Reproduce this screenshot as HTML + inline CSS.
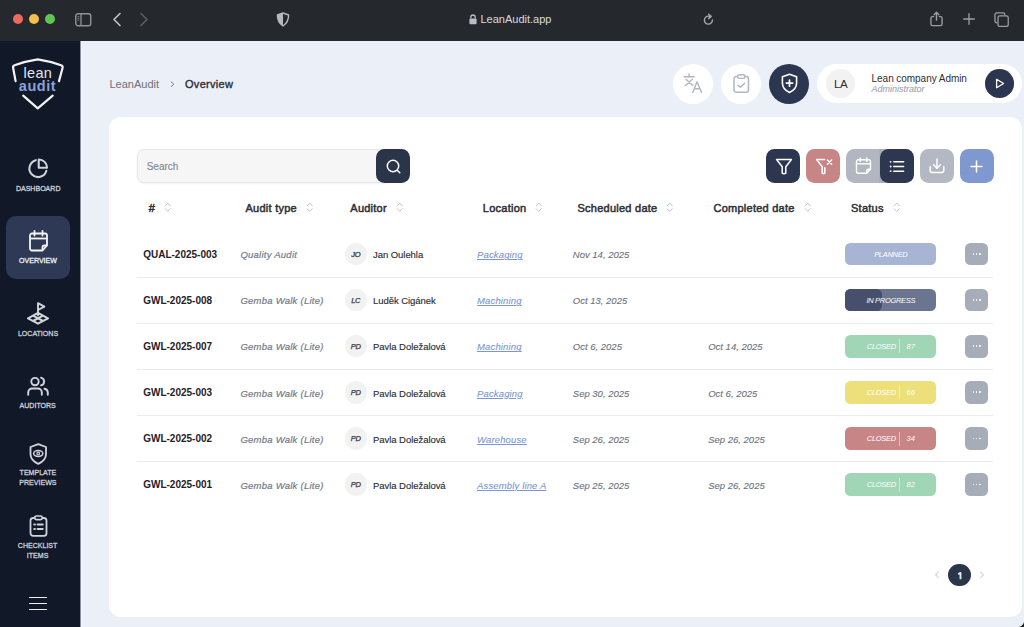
<!DOCTYPE html><html><head><meta charset="utf-8"><style>
html,body{margin:0;padding:0;width:1024px;height:627px;overflow:hidden;background:#ebeff7;font-family:"Liberation Sans", sans-serif;}
.a{position:absolute;}
.t{position:absolute;white-space:nowrap;}
</style></head><body>
<div class="a" style="left:0.00px;top:0.00px;width:1024.00px;height:40.50px;background:#25292d;border-radius:0px;"></div>
<div class="a" style="left:12.55px;top:13.95px;width:10.50px;height:10.50px;background:#ec6a5e;border-radius:5.25px;"></div>
<div class="a" style="left:28.55px;top:13.95px;width:10.50px;height:10.50px;background:#f4bf4f;border-radius:5.25px;"></div>
<div class="a" style="left:44.65px;top:13.95px;width:10.50px;height:10.50px;background:#61c554;border-radius:5.25px;"></div>
<svg class="a" style="left:74.50px;top:12.50px;" width="17" height="14" viewBox="0 0 17 14" fill="none"><rect x="0.75" y="0.75" width="15" height="12" rx="2.2" stroke="#8f9297" stroke-width="1.4"/><line x1="6" y1="1" x2="6" y2="13" stroke="#8f9297" stroke-width="1.3"/><line x1="2.6" y1="3.6" x2="4.2" y2="3.6" stroke="#8f9297" stroke-width="0.9"/><line x1="2.6" y1="5.4" x2="4.2" y2="5.4" stroke="#8f9297" stroke-width="0.9"/><line x1="2.6" y1="7.2" x2="4.2" y2="7.2" stroke="#8f9297" stroke-width="0.9"/></svg>
<svg class="a" style="left:112.00px;top:12.00px;" width="10" height="15" viewBox="0 0 10 15" fill="none"><polyline points="8,1.5 2,7.5 8,13.5" stroke="#c3c5c8" stroke-width="1.6" stroke-linecap="round" stroke-linejoin="round"/></svg>
<svg class="a" style="left:139.00px;top:12.00px;" width="10" height="15" viewBox="0 0 10 15" fill="none"><polyline points="2,1.5 8,7.5 2,13.5" stroke="#5b5e62" stroke-width="1.6" stroke-linecap="round" stroke-linejoin="round"/></svg>
<svg class="a" style="left:276.00px;top:12.00px;" width="14" height="15" viewBox="0 0 14 15" fill="none"><path d="M7 1 L12.6 3 Q12.8 10 7 14 Q1.2 10 1.4 3 Z" stroke="#b5b8bd" stroke-width="1.4" stroke-linejoin="round"/><path d="M7 1 L1.4 3 Q1.2 10 7 14 Z" fill="#b5b8bd"/></svg>
<svg class="a" style="left:468.50px;top:14.00px;" width="8" height="10.5" viewBox="0 0 8 10.5" fill="none"><path d="M1.8 4.6 V3.2 A2.2 2.2 0 0 1 6.2 3.2 V4.6" stroke="#b8bbbf" stroke-width="1.3"/><rect x="0.4" y="4.6" width="7.2" height="5.6" rx="1" fill="#b8bbbf"/></svg>
<div class="t" style="left:480.50px;top:14.19px;font-size:11px;line-height:11px;color:#d9dbdd;font-weight:normal;font-style:normal;">LeanAudit.app</div>
<svg class="a" style="left:703.00px;top:13.00px;" width="11" height="12.5" viewBox="0 0 11 12.5" fill="none"><path d="M7.3 3.6 A4 4 0 1 0 9.4 6.9" stroke="#a6a9ad" stroke-width="1.4" stroke-linecap="round"/><path d="M5.6 1.2 L8.2 3.4 L5.6 5.6" stroke="#a6a9ad" stroke-width="1.4" stroke-linecap="round" stroke-linejoin="round"/></svg>
<svg class="a" style="left:929.50px;top:11.00px;" width="13" height="15.8" viewBox="0 0 14 17" fill="none"><path d="M4.5 6 H2.8 A1.8 1.8 0 0 0 1 7.8 V13.9 A1.8 1.8 0 0 0 2.8 15.7 H11.2 A1.8 1.8 0 0 0 13 13.9 V7.8 A1.8 1.8 0 0 0 11.2 6 H9.5" stroke="#9c9fa4" stroke-width="1.45"/><line x1="7" y1="2" x2="7" y2="10.5" stroke="#9c9fa4" stroke-width="1.55"/><polyline points="4.4,4 7,1.3 9.6,4" stroke="#9c9fa4" stroke-width="1.45" stroke-linecap="round" stroke-linejoin="round"/></svg>
<svg class="a" style="left:962.80px;top:13.40px;" width="12" height="12" viewBox="0 0 12 12" fill="none"><line x1="6" y1="0.7" x2="6" y2="11.3" stroke="#9c9fa4" stroke-width="1.3" stroke-linecap="round"/><line x1="0.7" y1="6" x2="11.3" y2="6" stroke="#9c9fa4" stroke-width="1.3" stroke-linecap="round"/></svg>
<svg class="a" style="left:994.30px;top:11.50px;" width="15.5" height="15.5" viewBox="0 0 16 16" fill="none"><path d="M3.2 11.2 H2.8 A1.8 1.8 0 0 1 1 9.4 V2.8 A1.8 1.8 0 0 1 2.8 1 H9.4 A1.8 1.8 0 0 1 11.2 2.8 V3.2" stroke="#9c9fa4" stroke-width="1.3"/><rect x="4.1" y="4.1" width="10.6" height="10.8" rx="1.9" stroke="#9c9fa4" stroke-width="1.3"/></svg>
<div class="a" style="left:0.00px;top:40.50px;width:80.00px;height:586.50px;background:#111827;border-radius:0px;"></div>
<div class="a" style="left:80.00px;top:40.50px;width:1.00px;height:586.50px;background:#8a909c;border-radius:0px;"></div>
<div class="a" style="left:81.00px;top:40.50px;width:1.00px;height:586.50px;background:#f1f4fa;border-radius:0px;"></div>
<svg class="a" style="left:11.00px;top:57.50px;" width="54" height="52" viewBox="11 57.5 54 52" fill="none"><path d="M15.6 80.6 L13.1 67.2 Q12.8 65.4 14.6 64.8 Q26 60.6 37.7 58.9 Q49.4 60.6 61.1 64.8 Q62.9 65.4 62.6 67.2 L59 80.6" stroke="#f2f3f5" stroke-width="2.2" stroke-linejoin="round" stroke-linecap="round"/><path d="M23.2 95.2 L37.7 107.8 L52.7 95.2" stroke="#f2f3f5" stroke-width="2.2" stroke-linejoin="round" stroke-linecap="round"/></svg>
<div class="t" style="left:23.40px;top:65.73px;font-size:14.5px;line-height:14.5px;color:#e6e8ec;font-weight:normal;font-style:normal;letter-spacing:0.35px;">lean</div>
<div class="t" style="left:18.80px;top:79.23px;font-size:14.5px;line-height:14.5px;color:#8aa2d8;font-weight:bold;font-style:normal;letter-spacing:0.55px;">audit</div>
<svg class="a" style="left:26.20px;top:156.70px;" width="23.5" height="23.5" viewBox="0 0 24 24" fill="none"><path d="M10 3.2 A8.8 8.8 0 1 0 20.8 14" stroke="#d0d4dc" stroke-width="2.1" stroke-linecap="round"/><path d="M13 2.5 V11 H21.5 A8.5 8.5 0 0 0 13 2.5 Z" stroke="#d0d4dc" stroke-width="2.1" stroke-linejoin="round"/></svg>
<div class="t" style="left:0;width:76.4px;text-align:center;top:184.73px;font-size:8px;line-height:8px;color:#d0d4dc;-webkit-text-stroke:0.3px #d0d4dc;transform:scaleX(0.88);transform-origin:38.2px 0;">DASHBOARD</div>
<div class="a" style="left:5.80px;top:215.50px;width:64.10px;height:63.70px;background:#2e3a55;border-radius:10px;"></div>
<svg class="a" style="left:27.50px;top:230.00px;" width="21" height="22.5" viewBox="0 0 21 22.5" fill="none"><path d="M2 5.5 A2 2 0 0 1 4 3.5 H17 A2 2 0 0 1 19 5.5 V15.5 L14.5 20.5 H4 A2 2 0 0 1 2 18.5 Z" stroke="#f4f5f7" stroke-width="1.8" stroke-linejoin="round"/><line x1="2.5" y1="8.5" x2="18.5" y2="8.5" stroke="#f4f5f7" stroke-width="1.8"/><line x1="6.5" y1="1" x2="6.5" y2="5.5" stroke="#f4f5f7" stroke-width="1.8" stroke-linecap="round"/><line x1="14.5" y1="1" x2="14.5" y2="5.5" stroke="#f4f5f7" stroke-width="1.8" stroke-linecap="round"/><path d="M19 15.5 H16.5 A2 2 0 0 0 14.5 17.5 V20.5" stroke="#f4f5f7" stroke-width="1.8" stroke-linejoin="round"/></svg>
<div class="t" style="left:0;width:76.0px;text-align:center;top:257.43px;font-size:8px;line-height:8px;color:#f2f3f5;-webkit-text-stroke:0.3px #f2f3f5;transform:scaleX(0.88);transform-origin:38.0px 0;">OVERVIEW</div>
<svg class="a" style="left:26.70px;top:302.00px;" width="22" height="23.5" viewBox="0 0 22 23.5" fill="none"><path d="M11 10.9 L21 16.3 L11 21.7 L1 16.3 Z" stroke="#d0d4dc" stroke-width="2.1" stroke-linejoin="round"/><path d="M6 13.6 L16 19 M16 13.6 L6 19" stroke="#d0d4dc" stroke-width="2"/><path d="M11 13.2 V1.2 L17.4 4.6 L11 8" stroke="#d0d4dc" stroke-width="1.9" stroke-linejoin="round" stroke-linecap="round"/></svg>
<div class="t" style="left:0;width:76.0px;text-align:center;top:329.73px;font-size:8px;line-height:8px;color:#d0d4dc;-webkit-text-stroke:0.3px #d0d4dc;transform:scaleX(0.88);transform-origin:38.0px 0;">LOCATIONS</div>
<svg class="a" style="left:26.70px;top:376.00px;" width="22" height="20" viewBox="0 0 22 20" fill="none"><circle cx="8" cy="5.6" r="3.7" stroke="#d0d4dc" stroke-width="1.9"/><path d="M14 1.6 A4 4 0 0 1 14 9.4" stroke="#d0d4dc" stroke-width="1.9" stroke-linecap="round"/><path d="M1.2 18.8 V16.5 A4 4 0 0 1 5.2 12.5 H10.8 A4 4 0 0 1 14.8 16.5 V18.8" stroke="#d0d4dc" stroke-width="1.9" stroke-linecap="round"/><path d="M17.5 12.8 A4 4 0 0 1 20.8 16.6 V18.8" stroke="#d0d4dc" stroke-width="1.9" stroke-linecap="round"/></svg>
<div class="t" style="left:0;width:75.4px;text-align:center;top:402.13px;font-size:8px;line-height:8px;color:#d0d4dc;-webkit-text-stroke:0.3px #d0d4dc;transform:scaleX(0.88);transform-origin:37.7px 0;">AUDITORS</div>
<svg class="a" style="left:28.70px;top:442.50px;" width="18.5" height="22" viewBox="0 0 18.5 22" fill="none"><path d="M9.25 1.2 L17 4 V11 Q17 17.5 9.25 20.8 Q1.5 17.5 1.5 11 V4 Z" stroke="#d0d4dc" stroke-width="1.8" stroke-linejoin="round"/><ellipse cx="9.25" cy="10.5" rx="4.6" ry="2.9" stroke="#d0d4dc" stroke-width="1.5"/><circle cx="9.25" cy="10.5" r="1.3" stroke="#d0d4dc" stroke-width="1.2"/></svg>
<div class="t" style="left:0;width:75.8px;text-align:center;top:469.43px;font-size:8px;line-height:8px;color:#d0d4dc;-webkit-text-stroke:0.3px #d0d4dc;transform:scaleX(0.88);transform-origin:37.9px 0;">TEMPLATE</div>
<div class="t" style="left:0;width:75.8px;text-align:center;top:479.43px;font-size:8px;line-height:8px;color:#d0d4dc;-webkit-text-stroke:0.3px #d0d4dc;transform:scaleX(0.88);transform-origin:37.9px 0;">PREVIEWS</div>
<svg class="a" style="left:28.50px;top:515.00px;" width="19" height="22" viewBox="0 0 19 22" fill="none"><rect x="1.5" y="3" width="16" height="17.8" rx="2.6" stroke="#d0d4dc" stroke-width="1.8"/><rect x="5.8" y="1" width="7.4" height="3.6" rx="1.6" stroke="#d0d4dc" stroke-width="1.7" fill="#111827"/><line x1="5.2" y1="9.5" x2="6" y2="9.5" stroke="#d0d4dc" stroke-width="1.8" stroke-linecap="round"/><line x1="8.5" y1="9.5" x2="13.8" y2="9.5" stroke="#d0d4dc" stroke-width="1.8" stroke-linecap="round"/><line x1="5.2" y1="14" x2="6" y2="14" stroke="#d0d4dc" stroke-width="1.8" stroke-linecap="round"/><line x1="8.5" y1="14" x2="13.8" y2="14" stroke="#d0d4dc" stroke-width="1.8" stroke-linecap="round"/></svg>
<div class="t" style="left:0;width:75.2px;text-align:center;top:542.43px;font-size:8px;line-height:8px;color:#d0d4dc;-webkit-text-stroke:0.3px #d0d4dc;transform:scaleX(0.88);transform-origin:37.6px 0;">CHECKLIST</div>
<div class="t" style="left:0;width:75.2px;text-align:center;top:551.93px;font-size:8px;line-height:8px;color:#d0d4dc;-webkit-text-stroke:0.3px #d0d4dc;transform:scaleX(0.88);transform-origin:37.6px 0;">ITEMS</div>
<div class="a" style="left:29.20px;top:596.60px;width:17.40px;height:1.80px;background:#eef0f3;border-radius:1px;"></div>
<div class="a" style="left:29.20px;top:602.60px;width:17.40px;height:1.80px;background:#eef0f3;border-radius:1px;"></div>
<div class="a" style="left:29.20px;top:608.60px;width:17.40px;height:1.80px;background:#eef0f3;border-radius:1px;"></div>
<div class="t" style="left:109.50px;top:78.99px;font-size:11px;line-height:11px;color:#6d717a;font-weight:normal;font-style:normal;">LeanAudit</div>
<svg class="a" style="left:170.30px;top:80.80px;" width="5" height="6.5" viewBox="0 0 5 6.5" fill="none"><polyline points="1.1,0.9 3.9,3.25 1.1,5.6" stroke="#7d818a" stroke-width="1" stroke-linecap="round" stroke-linejoin="round"/></svg>
<div class="t" style="left:185.00px;top:78.99px;font-size:11px;line-height:11px;color:#2c2e33;font-weight:normal;font-style:normal;letter-spacing:0.3px;-webkit-text-stroke:0.35px #2c2e33;">Overview</div>
<div class="a" style="left:672.50px;top:63.50px;width:40.00px;height:40.00px;background:#ffffff;border-radius:20.0px;"></div>
<div class="a" style="left:720.80px;top:63.50px;width:40.00px;height:40.00px;background:#ffffff;border-radius:20.0px;"></div>
<div class="a" style="left:769.10px;top:63.50px;width:40.00px;height:40.00px;background:#2c3650;border-radius:20.0px;"></div>
<svg class="a" style="left:682.50px;top:73.00px;" width="20" height="20.5" viewBox="0 0 20 20.5" fill="none"><line x1="1" y1="3.8" x2="11.2" y2="3.8" stroke="#b0b5c0" stroke-width="1.4" stroke-linecap="round"/><line x1="6.1" y1="1" x2="6.1" y2="3.8" stroke="#b0b5c0" stroke-width="1.4" stroke-linecap="round"/><path d="M3 6.2 L9.8 12.6 M9.4 6.2 L2.4 12.6" stroke="#b0b5c0" stroke-width="1.4" stroke-linecap="round"/><path d="M9.8 19.4 L14 8.8 L18.6 19.4 M11.3 15.8 H17.1" stroke="#b0b5c0" stroke-width="1.4" stroke-linecap="round" stroke-linejoin="round"/></svg>
<svg class="a" style="left:733.00px;top:74.00px;" width="16.5" height="19" viewBox="0 0 16.5 19" fill="none"><rect x="1" y="2.6" width="14.5" height="15.6" rx="2.3" stroke="#b0b5c0" stroke-width="1.5"/><rect x="4.6" y="0.8" width="7.3" height="3.6" rx="1.6" stroke="#b0b5c0" stroke-width="1.4" fill="#fff"/><polyline points="5,11.2 7.4,13.3 11.6,9.3" stroke="#b0b5c0" stroke-width="1.4" stroke-linecap="round" stroke-linejoin="round"/></svg>
<svg class="a" style="left:780.50px;top:73.00px;" width="17" height="20.5" viewBox="0 0 17 20.5" fill="none"><path d="M8.5 1.2 L15.6 3.8 V10 Q15.6 16.2 8.5 19.4 Q1.4 16.2 1.4 10 V3.8 Z" stroke="#ffffff" stroke-width="1.6" stroke-linejoin="round"/><line x1="8.5" y1="7" x2="8.5" y2="13.2" stroke="#fff" stroke-width="1.7" stroke-linecap="round"/><line x1="5.4" y1="10.1" x2="11.6" y2="10.1" stroke="#fff" stroke-width="1.7" stroke-linecap="round"/></svg>
<div class="a" style="left:817.30px;top:63.70px;width:204.90px;height:39.70px;background:#ffffff;border-radius:20px;"></div>
<div class="a" style="left:826.15px;top:69.25px;width:28.50px;height:28.50px;background:#f2f2f3;border-radius:14.25px;"></div>
<div class="t" style="left:834.00px;top:78.67px;font-size:11.5px;line-height:11.5px;color:#2d2f34;font-weight:normal;font-style:normal;letter-spacing:-0.3px;">LA</div>
<div class="t" style="left:871.60px;top:73.73px;font-size:10px;line-height:10px;color:#2d2f34;font-weight:normal;font-style:normal;letter-spacing:-0.05px;">Lean company Admin</div>
<div class="t" style="left:871.60px;top:84.78px;font-size:9px;line-height:9px;color:#9ea3af;font-weight:normal;font-style:italic;-webkit-text-stroke:0.1px #9ea3af;">Administrator</div>
<div class="a" style="left:985.05px;top:69.15px;width:28.70px;height:28.70px;background:#2c3650;border-radius:14.35px;"></div>
<svg class="a" style="left:994.50px;top:78.00px;" width="10" height="11" viewBox="0 0 10 11" fill="none"><path d="M1.6 1.3 L8.6 5.5 L1.6 9.7 Z" stroke="#fff" stroke-width="1.3" stroke-linejoin="round"/></svg>
<div class="a" style="left:108.80px;top:117.40px;width:913.50px;height:500.10px;background:#ffffff;border-radius:12px;"></div>
<div class="a" style="left:137.00px;top:149.00px;width:255.00px;height:34.00px;background:#f6f6f7;border-radius:7px;box-sizing:border-box;border:1px solid #e4e7ee;box-shadow:0 1px 2px rgba(40,50,80,0.06);"></div>
<div class="t" style="left:146.70px;top:161.84px;font-size:10px;line-height:10px;color:#85888e;font-weight:normal;font-style:normal;-webkit-text-stroke:0.15px #85888e;">Search</div>
<div class="a" style="left:375.80px;top:148.80px;width:34.10px;height:34.00px;background:#2b3549;border-radius:8.5px;"></div>
<svg class="a" style="left:384.50px;top:157.50px;" width="17" height="17" viewBox="0 0 17 17" fill="none"><circle cx="8" cy="8" r="5.7" stroke="#fff" stroke-width="1.5"/><line x1="12.2" y1="12.2" x2="14.8" y2="14.8" stroke="#fff" stroke-width="1.5" stroke-linecap="round"/></svg>
<div class="a" style="left:766.40px;top:148.80px;width:34.00px;height:34.00px;background:#2c3650;border-radius:8.5px;"></div>
<svg class="a" style="left:774.50px;top:158.00px;" width="18" height="17" viewBox="0 0 18 17" fill="none"><path d="M1.6 1.6 H16.4 L10.8 8.8 V15.2 Q9 16.4 7.2 15.2 V8.8 Z" stroke="#fff" stroke-width="1.5" stroke-linejoin="round"/></svg>
<div class="a" style="left:806.30px;top:148.80px;width:34.00px;height:34.00px;background:#c88585;border-radius:8.5px;"></div>
<svg class="a" style="left:814.50px;top:158.00px;" width="18" height="17" viewBox="0 0 18 17" fill="none"><path d="M9.6 1.6 H1.6 L7.2 8.8 V15.2 Q8.6 16.2 9.8 15.2 V9.8" stroke="#fff" stroke-width="1.5" stroke-linejoin="round" stroke-linecap="round"/><path d="M12.4 2 L16.6 6.2 M16.6 2 L12.4 6.2" stroke="#fff" stroke-width="1.5" stroke-linecap="round"/></svg>
<div class="a" style="left:845.90px;top:148.80px;width:68.30px;height:34.00px;background:#b1b6c1;border-radius:8.5px;"></div>
<div class="a" style="left:878.50px;top:148.80px;width:5.50px;height:34.00px;background:#a9aeba;border-radius:0px;"></div>
<div class="a" style="left:880.20px;top:148.80px;width:34.00px;height:34.00px;background:#2e3750;border-radius:8.5px;"></div>
<svg class="a" style="left:854.50px;top:157.00px;" width="17" height="17.5" viewBox="0 0 17 17.5" fill="none"><path d="M1.5 4.5 A1.8 1.8 0 0 1 3.3 2.7 H13.7 A1.8 1.8 0 0 1 15.5 4.5 V12.2 L11.7 16.2 H3.3 A1.8 1.8 0 0 1 1.5 14.4 Z" stroke="#fff" stroke-width="1.4" stroke-linejoin="round"/><line x1="1.8" y1="6.8" x2="15.2" y2="6.8" stroke="#fff" stroke-width="1.4"/><line x1="5.2" y1="1" x2="5.2" y2="4.4" stroke="#fff" stroke-width="1.4" stroke-linecap="round"/><line x1="11.8" y1="1" x2="11.8" y2="4.4" stroke="#fff" stroke-width="1.4" stroke-linecap="round"/><path d="M15.5 12.2 H13.5 A1.8 1.8 0 0 0 11.7 14 V16.2" stroke="#fff" stroke-width="1.4" stroke-linejoin="round"/></svg>
<svg class="a" style="left:889.00px;top:159.50px;" width="16" height="13" viewBox="0 0 16 13" fill="none"><circle cx="1.6" cy="1.8" r="0.9" fill="#fff"/><circle cx="1.6" cy="6.5" r="0.9" fill="#fff"/><circle cx="1.6" cy="11.2" r="0.9" fill="#fff"/><line x1="4.8" y1="1.8" x2="14.6" y2="1.8" stroke="#fff" stroke-width="1.6" stroke-linecap="round"/><line x1="4.8" y1="6.5" x2="14.6" y2="6.5" stroke="#fff" stroke-width="1.6" stroke-linecap="round"/><line x1="4.8" y1="11.2" x2="14.6" y2="11.2" stroke="#fff" stroke-width="1.6" stroke-linecap="round"/></svg>
<div class="a" style="left:920.00px;top:148.80px;width:33.80px;height:34.00px;background:#b4b8c2;border-radius:8.5px;"></div>
<svg class="a" style="left:929.00px;top:158.00px;" width="16" height="15.5" viewBox="0 0 16 15.5" fill="none"><path d="M1.2 8.8 V12.6 A1.8 1.8 0 0 0 3 14.4 H13 A1.8 1.8 0 0 0 14.8 12.6 V8.8" stroke="#fff" stroke-width="1.5" stroke-linecap="round"/><line x1="8" y1="1" x2="8" y2="10" stroke="#fff" stroke-width="1.5" stroke-linecap="round"/><polyline points="4.6,6.8 8,10.2 11.4,6.8" stroke="#fff" stroke-width="1.5" stroke-linecap="round" stroke-linejoin="round"/></svg>
<div class="a" style="left:959.50px;top:148.80px;width:34.40px;height:34.00px;background:#7f98cf;border-radius:8.5px;"></div>
<svg class="a" style="left:970.20px;top:159.50px;" width="13" height="13" viewBox="0 0 13 13" fill="none"><line x1="6.5" y1="1" x2="6.5" y2="12" stroke="#fff" stroke-width="1.5" stroke-linecap="round"/><line x1="1" y1="6.5" x2="12" y2="6.5" stroke="#fff" stroke-width="1.5" stroke-linecap="round"/></svg>
<div class="t" style="left:148.80px;top:202.89px;font-size:11px;line-height:11px;color:#2f3137;font-weight:normal;font-style:normal;letter-spacing:0.25px;-webkit-text-stroke:0.5px #2f3137;">#</div>
<svg class="a" style="left:164.10px;top:202.40px;" width="7.5" height="10.5" viewBox="0 0 7.5 10.5" fill="none"><polyline points="1.2,3.8 3.75,1.1 6.3,3.8" stroke="#bcc0c9" stroke-width="0.95" stroke-linecap="round" stroke-linejoin="round"/><polyline points="1.2,6.7 3.75,9.4 6.3,6.7" stroke="#bcc0c9" stroke-width="0.95" stroke-linecap="round" stroke-linejoin="round"/></svg>
<div class="t" style="left:245.50px;top:202.89px;font-size:11px;line-height:11px;color:#2f3137;font-weight:normal;font-style:normal;letter-spacing:0.25px;-webkit-text-stroke:0.5px #2f3137;">Audit type</div>
<svg class="a" style="left:305.80px;top:202.40px;" width="7.5" height="10.5" viewBox="0 0 7.5 10.5" fill="none"><polyline points="1.2,3.8 3.75,1.1 6.3,3.8" stroke="#bcc0c9" stroke-width="0.95" stroke-linecap="round" stroke-linejoin="round"/><polyline points="1.2,6.7 3.75,9.4 6.3,6.7" stroke="#bcc0c9" stroke-width="0.95" stroke-linecap="round" stroke-linejoin="round"/></svg>
<div class="t" style="left:350.30px;top:202.89px;font-size:11px;line-height:11px;color:#2f3137;font-weight:normal;font-style:normal;letter-spacing:0.25px;-webkit-text-stroke:0.5px #2f3137;">Auditor</div>
<svg class="a" style="left:396.30px;top:202.40px;" width="7.5" height="10.5" viewBox="0 0 7.5 10.5" fill="none"><polyline points="1.2,3.8 3.75,1.1 6.3,3.8" stroke="#bcc0c9" stroke-width="0.95" stroke-linecap="round" stroke-linejoin="round"/><polyline points="1.2,6.7 3.75,9.4 6.3,6.7" stroke="#bcc0c9" stroke-width="0.95" stroke-linecap="round" stroke-linejoin="round"/></svg>
<div class="t" style="left:482.80px;top:202.89px;font-size:11px;line-height:11px;color:#2f3137;font-weight:normal;font-style:normal;letter-spacing:0.25px;-webkit-text-stroke:0.5px #2f3137;">Location</div>
<svg class="a" style="left:535.30px;top:202.40px;" width="7.5" height="10.5" viewBox="0 0 7.5 10.5" fill="none"><polyline points="1.2,3.8 3.75,1.1 6.3,3.8" stroke="#bcc0c9" stroke-width="0.95" stroke-linecap="round" stroke-linejoin="round"/><polyline points="1.2,6.7 3.75,9.4 6.3,6.7" stroke="#bcc0c9" stroke-width="0.95" stroke-linecap="round" stroke-linejoin="round"/></svg>
<div class="t" style="left:577.50px;top:202.89px;font-size:11px;line-height:11px;color:#2f3137;font-weight:normal;font-style:normal;letter-spacing:0.25px;-webkit-text-stroke:0.5px #2f3137;">Scheduled date</div>
<svg class="a" style="left:665.50px;top:202.40px;" width="7.5" height="10.5" viewBox="0 0 7.5 10.5" fill="none"><polyline points="1.2,3.8 3.75,1.1 6.3,3.8" stroke="#bcc0c9" stroke-width="0.95" stroke-linecap="round" stroke-linejoin="round"/><polyline points="1.2,6.7 3.75,9.4 6.3,6.7" stroke="#bcc0c9" stroke-width="0.95" stroke-linecap="round" stroke-linejoin="round"/></svg>
<div class="t" style="left:713.50px;top:202.89px;font-size:11px;line-height:11px;color:#2f3137;font-weight:normal;font-style:normal;letter-spacing:0.25px;-webkit-text-stroke:0.5px #2f3137;">Completed date</div>
<svg class="a" style="left:803.80px;top:202.40px;" width="7.5" height="10.5" viewBox="0 0 7.5 10.5" fill="none"><polyline points="1.2,3.8 3.75,1.1 6.3,3.8" stroke="#bcc0c9" stroke-width="0.95" stroke-linecap="round" stroke-linejoin="round"/><polyline points="1.2,6.7 3.75,9.4 6.3,6.7" stroke="#bcc0c9" stroke-width="0.95" stroke-linecap="round" stroke-linejoin="round"/></svg>
<div class="t" style="left:851.00px;top:202.89px;font-size:11px;line-height:11px;color:#2f3137;font-weight:normal;font-style:normal;letter-spacing:0.25px;-webkit-text-stroke:0.5px #2f3137;">Status</div>
<svg class="a" style="left:892.80px;top:202.40px;" width="7.5" height="10.5" viewBox="0 0 7.5 10.5" fill="none"><polyline points="1.2,3.8 3.75,1.1 6.3,3.8" stroke="#bcc0c9" stroke-width="0.95" stroke-linecap="round" stroke-linejoin="round"/><polyline points="1.2,6.7 3.75,9.4 6.3,6.7" stroke="#bcc0c9" stroke-width="0.95" stroke-linecap="round" stroke-linejoin="round"/></svg>
<div class="t" style="left:143.20px;top:249.53px;font-size:10px;line-height:10px;color:#1f2126;font-weight:bold;font-style:normal;">QUAL-2025-003</div>
<div class="t" style="left:240.40px;top:250.26px;font-size:9.5px;line-height:9.5px;color:#737a89;font-weight:normal;font-style:italic;letter-spacing:0.25px;-webkit-text-stroke:0.2px #737a89;">Quality Audit</div>
<div class="a" style="left:344.65px;top:242.95px;width:22.30px;height:22.30px;background:#f2f2f3;border-radius:11.15px;"></div>
<div class="t" style="left:344.6px;width:22.3px;text-align:center;top:250.70px;font-size:7.5px;line-height:7.5px;color:#34363b;font-style:italic;-webkit-text-stroke:0.25px #34363b;letter-spacing:-0.2px;">JO</div>
<div class="t" style="left:373.00px;top:250.26px;font-size:9.5px;line-height:9.5px;color:#2d2f34;font-weight:normal;font-style:normal;letter-spacing:-0.05px;-webkit-text-stroke:0.15px #2d2f34;">Jan Oulehla</div>
<div class="t" style="left:477.00px;top:250.26px;font-size:9.5px;line-height:9.5px;color:#7a96d6;font-weight:normal;font-style:italic;text-decoration:underline;text-decoration-thickness:0.8px;text-underline-offset:1px;letter-spacing:0.15px;-webkit-text-stroke:0.1px #7a96d6;">Packaging</div>
<div class="t" style="left:572.80px;top:250.26px;font-size:9.5px;line-height:9.5px;color:#6b707c;font-weight:normal;font-style:italic;letter-spacing:0px;-webkit-text-stroke:0.1px #6b707c;">Nov 14, 2025</div>
<div class="a" style="left:845.30px;top:242.80px;width:90.90px;height:22.50px;background:#a7b4d4;border-radius:5.5px;"></div>
<div class="t" style="left:845.3px;width:91px;text-align:center;top:250.60px;font-size:7.5px;line-height:7.5px;color:#fff;font-style:italic;letter-spacing:-0.3px;">PLANNED</div>
<div class="a" style="left:965.30px;top:242.80px;width:22.70px;height:22.50px;background:#a7adb8;border-radius:5.5px;"></div>
<div class="a" style="left:972.60px;top:253.10px;width:1.60px;height:1.60px;background:#ffffff;border-radius:0.8px;"></div>
<div class="a" style="left:975.80px;top:253.10px;width:1.60px;height:1.60px;background:#ffffff;border-radius:0.8px;"></div>
<div class="a" style="left:979.00px;top:253.10px;width:1.60px;height:1.60px;background:#ffffff;border-radius:0.8px;"></div>
<div class="a" style="left:137.30px;top:276.50px;width:855.90px;height:1.10px;background:#ececee;border-radius:0px;"></div>
<div class="t" style="left:143.20px;top:295.64px;font-size:10px;line-height:10px;color:#1f2126;font-weight:bold;font-style:normal;">GWL-2025-008</div>
<div class="t" style="left:240.40px;top:296.36px;font-size:9.5px;line-height:9.5px;color:#737a89;font-weight:normal;font-style:italic;letter-spacing:0.25px;-webkit-text-stroke:0.2px #737a89;">Gemba Walk (Lite)</div>
<div class="a" style="left:344.65px;top:289.05px;width:22.30px;height:22.30px;background:#f2f2f3;border-radius:11.15px;"></div>
<div class="t" style="left:344.6px;width:22.3px;text-align:center;top:296.80px;font-size:7.5px;line-height:7.5px;color:#34363b;font-style:italic;-webkit-text-stroke:0.25px #34363b;letter-spacing:-0.2px;">LC</div>
<div class="t" style="left:373.00px;top:296.36px;font-size:9.5px;line-height:9.5px;color:#2d2f34;font-weight:normal;font-style:normal;letter-spacing:-0.05px;-webkit-text-stroke:0.15px #2d2f34;">Luděk Cigánek</div>
<div class="t" style="left:477.00px;top:296.36px;font-size:9.5px;line-height:9.5px;color:#7a96d6;font-weight:normal;font-style:italic;text-decoration:underline;text-decoration-thickness:0.8px;text-underline-offset:1px;letter-spacing:0.15px;-webkit-text-stroke:0.1px #7a96d6;">Machining</div>
<div class="t" style="left:572.80px;top:296.36px;font-size:9.5px;line-height:9.5px;color:#6b707c;font-weight:normal;font-style:italic;letter-spacing:0px;-webkit-text-stroke:0.1px #6b707c;">Oct 13, 2025</div>
<div class="a" style="left:845.30px;top:288.90px;width:90.90px;height:22.50px;background:#6b7590;border-radius:5.5px;"></div>
<div class="a" style="left:845.30px;top:288.90px;width:36.70px;height:22.50px;background:#464f6c;border-radius:5.5px;"></div>
<div class="t" style="left:845.3px;width:91px;text-align:center;top:296.70px;font-size:7.5px;line-height:7.5px;color:#fff;font-style:italic;letter-spacing:-0.3px;">IN PROGRESS</div>
<div class="a" style="left:965.30px;top:288.90px;width:22.70px;height:22.50px;background:#a7adb8;border-radius:5.5px;"></div>
<div class="a" style="left:972.60px;top:299.20px;width:1.60px;height:1.60px;background:#ffffff;border-radius:0.8px;"></div>
<div class="a" style="left:975.80px;top:299.20px;width:1.60px;height:1.60px;background:#ffffff;border-radius:0.8px;"></div>
<div class="a" style="left:979.00px;top:299.20px;width:1.60px;height:1.60px;background:#ffffff;border-radius:0.8px;"></div>
<div class="a" style="left:137.30px;top:322.60px;width:855.90px;height:1.10px;background:#ececee;border-radius:0px;"></div>
<div class="t" style="left:143.20px;top:341.74px;font-size:10px;line-height:10px;color:#1f2126;font-weight:bold;font-style:normal;">GWL-2025-007</div>
<div class="t" style="left:240.40px;top:342.46px;font-size:9.5px;line-height:9.5px;color:#737a89;font-weight:normal;font-style:italic;letter-spacing:0.25px;-webkit-text-stroke:0.2px #737a89;">Gemba Walk (Lite)</div>
<div class="a" style="left:344.65px;top:335.15px;width:22.30px;height:22.30px;background:#f2f2f3;border-radius:11.15px;"></div>
<div class="t" style="left:344.6px;width:22.3px;text-align:center;top:342.90px;font-size:7.5px;line-height:7.5px;color:#34363b;font-style:italic;-webkit-text-stroke:0.25px #34363b;letter-spacing:-0.2px;">PD</div>
<div class="t" style="left:373.00px;top:342.46px;font-size:9.5px;line-height:9.5px;color:#2d2f34;font-weight:normal;font-style:normal;letter-spacing:-0.05px;-webkit-text-stroke:0.15px #2d2f34;">Pavla Doležalová</div>
<div class="t" style="left:477.00px;top:342.46px;font-size:9.5px;line-height:9.5px;color:#7a96d6;font-weight:normal;font-style:italic;text-decoration:underline;text-decoration-thickness:0.8px;text-underline-offset:1px;letter-spacing:0.15px;-webkit-text-stroke:0.1px #7a96d6;">Machining</div>
<div class="t" style="left:572.80px;top:342.46px;font-size:9.5px;line-height:9.5px;color:#6b707c;font-weight:normal;font-style:italic;letter-spacing:0px;-webkit-text-stroke:0.1px #6b707c;">Oct 6, 2025</div>
<div class="t" style="left:708.20px;top:342.46px;font-size:9.5px;line-height:9.5px;color:#6b707c;font-weight:normal;font-style:italic;letter-spacing:0px;-webkit-text-stroke:0.1px #6b707c;">Oct 14, 2025</div>
<div class="a" style="left:845.30px;top:335.00px;width:90.90px;height:22.50px;background:#a0d6b6;border-radius:5.5px;"></div>
<div class="t" style="left:866.8px;top:342.80px;font-size:7.5px;line-height:7.5px;color:#fff;font-style:italic;letter-spacing:-0.3px;">CLOSED</div>
<div class="a" style="left:899.20px;top:339.30px;width:0.70px;height:14.00px;background:rgba(255,255,255,0.45);border-radius:0px;"></div>
<div class="t" style="left:906.5px;top:342.80px;font-size:7.5px;line-height:7.5px;color:#fff;font-style:italic;">87</div>
<div class="a" style="left:965.30px;top:335.00px;width:22.70px;height:22.50px;background:#a7adb8;border-radius:5.5px;"></div>
<div class="a" style="left:972.60px;top:345.30px;width:1.60px;height:1.60px;background:#ffffff;border-radius:0.8px;"></div>
<div class="a" style="left:975.80px;top:345.30px;width:1.60px;height:1.60px;background:#ffffff;border-radius:0.8px;"></div>
<div class="a" style="left:979.00px;top:345.30px;width:1.60px;height:1.60px;background:#ffffff;border-radius:0.8px;"></div>
<div class="a" style="left:137.30px;top:368.70px;width:855.90px;height:1.10px;background:#ececee;border-radius:0px;"></div>
<div class="t" style="left:143.20px;top:387.84px;font-size:10px;line-height:10px;color:#1f2126;font-weight:bold;font-style:normal;">GWL-2025-003</div>
<div class="t" style="left:240.40px;top:388.56px;font-size:9.5px;line-height:9.5px;color:#737a89;font-weight:normal;font-style:italic;letter-spacing:0.25px;-webkit-text-stroke:0.2px #737a89;">Gemba Walk (Lite)</div>
<div class="a" style="left:344.65px;top:381.25px;width:22.30px;height:22.30px;background:#f2f2f3;border-radius:11.15px;"></div>
<div class="t" style="left:344.6px;width:22.3px;text-align:center;top:389.00px;font-size:7.5px;line-height:7.5px;color:#34363b;font-style:italic;-webkit-text-stroke:0.25px #34363b;letter-spacing:-0.2px;">PD</div>
<div class="t" style="left:373.00px;top:388.56px;font-size:9.5px;line-height:9.5px;color:#2d2f34;font-weight:normal;font-style:normal;letter-spacing:-0.05px;-webkit-text-stroke:0.15px #2d2f34;">Pavla Doležalová</div>
<div class="t" style="left:477.00px;top:388.56px;font-size:9.5px;line-height:9.5px;color:#7a96d6;font-weight:normal;font-style:italic;text-decoration:underline;text-decoration-thickness:0.8px;text-underline-offset:1px;letter-spacing:0.15px;-webkit-text-stroke:0.1px #7a96d6;">Packaging</div>
<div class="t" style="left:572.80px;top:388.56px;font-size:9.5px;line-height:9.5px;color:#6b707c;font-weight:normal;font-style:italic;letter-spacing:0px;-webkit-text-stroke:0.1px #6b707c;">Sep 30, 2025</div>
<div class="t" style="left:708.20px;top:388.56px;font-size:9.5px;line-height:9.5px;color:#6b707c;font-weight:normal;font-style:italic;letter-spacing:0px;-webkit-text-stroke:0.1px #6b707c;">Oct 6, 2025</div>
<div class="a" style="left:845.30px;top:381.10px;width:90.90px;height:22.50px;background:#ede07a;border-radius:5.5px;"></div>
<div class="t" style="left:866.8px;top:388.90px;font-size:7.5px;line-height:7.5px;color:#fff;font-style:italic;letter-spacing:-0.3px;">CLOSED</div>
<div class="a" style="left:899.20px;top:385.40px;width:0.70px;height:14.00px;background:rgba(255,255,255,0.45);border-radius:0px;"></div>
<div class="t" style="left:906.5px;top:388.90px;font-size:7.5px;line-height:7.5px;color:#fff;font-style:italic;">66</div>
<div class="a" style="left:965.30px;top:381.10px;width:22.70px;height:22.50px;background:#a7adb8;border-radius:5.5px;"></div>
<div class="a" style="left:972.60px;top:391.40px;width:1.60px;height:1.60px;background:#ffffff;border-radius:0.8px;"></div>
<div class="a" style="left:975.80px;top:391.40px;width:1.60px;height:1.60px;background:#ffffff;border-radius:0.8px;"></div>
<div class="a" style="left:979.00px;top:391.40px;width:1.60px;height:1.60px;background:#ffffff;border-radius:0.8px;"></div>
<div class="a" style="left:137.30px;top:414.80px;width:855.90px;height:1.10px;background:#ececee;border-radius:0px;"></div>
<div class="t" style="left:143.20px;top:433.94px;font-size:10px;line-height:10px;color:#1f2126;font-weight:bold;font-style:normal;">GWL-2025-002</div>
<div class="t" style="left:240.40px;top:434.66px;font-size:9.5px;line-height:9.5px;color:#737a89;font-weight:normal;font-style:italic;letter-spacing:0.25px;-webkit-text-stroke:0.2px #737a89;">Gemba Walk (Lite)</div>
<div class="a" style="left:344.65px;top:427.35px;width:22.30px;height:22.30px;background:#f2f2f3;border-radius:11.15px;"></div>
<div class="t" style="left:344.6px;width:22.3px;text-align:center;top:435.10px;font-size:7.5px;line-height:7.5px;color:#34363b;font-style:italic;-webkit-text-stroke:0.25px #34363b;letter-spacing:-0.2px;">PD</div>
<div class="t" style="left:373.00px;top:434.66px;font-size:9.5px;line-height:9.5px;color:#2d2f34;font-weight:normal;font-style:normal;letter-spacing:-0.05px;-webkit-text-stroke:0.15px #2d2f34;">Pavla Doležalová</div>
<div class="t" style="left:477.00px;top:434.66px;font-size:9.5px;line-height:9.5px;color:#7a96d6;font-weight:normal;font-style:italic;text-decoration:underline;text-decoration-thickness:0.8px;text-underline-offset:1px;letter-spacing:0.15px;-webkit-text-stroke:0.1px #7a96d6;">Warehouse</div>
<div class="t" style="left:572.80px;top:434.66px;font-size:9.5px;line-height:9.5px;color:#6b707c;font-weight:normal;font-style:italic;letter-spacing:0px;-webkit-text-stroke:0.1px #6b707c;">Sep 26, 2025</div>
<div class="t" style="left:708.20px;top:434.66px;font-size:9.5px;line-height:9.5px;color:#6b707c;font-weight:normal;font-style:italic;letter-spacing:0px;-webkit-text-stroke:0.1px #6b707c;">Sep 26, 2025</div>
<div class="a" style="left:845.30px;top:427.20px;width:90.90px;height:22.50px;background:#c88585;border-radius:5.5px;"></div>
<div class="t" style="left:866.8px;top:435.00px;font-size:7.5px;line-height:7.5px;color:#fff;font-style:italic;letter-spacing:-0.3px;">CLOSED</div>
<div class="a" style="left:899.20px;top:431.50px;width:0.70px;height:14.00px;background:rgba(255,255,255,0.45);border-radius:0px;"></div>
<div class="t" style="left:906.5px;top:435.00px;font-size:7.5px;line-height:7.5px;color:#fff;font-style:italic;">34</div>
<div class="a" style="left:965.30px;top:427.20px;width:22.70px;height:22.50px;background:#a7adb8;border-radius:5.5px;"></div>
<div class="a" style="left:972.60px;top:437.50px;width:1.60px;height:1.60px;background:#ffffff;border-radius:0.8px;"></div>
<div class="a" style="left:975.80px;top:437.50px;width:1.60px;height:1.60px;background:#ffffff;border-radius:0.8px;"></div>
<div class="a" style="left:979.00px;top:437.50px;width:1.60px;height:1.60px;background:#ffffff;border-radius:0.8px;"></div>
<div class="a" style="left:137.30px;top:460.90px;width:855.90px;height:1.10px;background:#ececee;border-radius:0px;"></div>
<div class="t" style="left:143.20px;top:480.04px;font-size:10px;line-height:10px;color:#1f2126;font-weight:bold;font-style:normal;">GWL-2025-001</div>
<div class="t" style="left:240.40px;top:480.76px;font-size:9.5px;line-height:9.5px;color:#737a89;font-weight:normal;font-style:italic;letter-spacing:0.25px;-webkit-text-stroke:0.2px #737a89;">Gemba Walk (Lite)</div>
<div class="a" style="left:344.65px;top:473.45px;width:22.30px;height:22.30px;background:#f2f2f3;border-radius:11.15px;"></div>
<div class="t" style="left:344.6px;width:22.3px;text-align:center;top:481.20px;font-size:7.5px;line-height:7.5px;color:#34363b;font-style:italic;-webkit-text-stroke:0.25px #34363b;letter-spacing:-0.2px;">PD</div>
<div class="t" style="left:373.00px;top:480.76px;font-size:9.5px;line-height:9.5px;color:#2d2f34;font-weight:normal;font-style:normal;letter-spacing:-0.05px;-webkit-text-stroke:0.15px #2d2f34;">Pavla Doležalová</div>
<div class="t" style="left:477.00px;top:480.76px;font-size:9.5px;line-height:9.5px;color:#7a96d6;font-weight:normal;font-style:italic;text-decoration:underline;text-decoration-thickness:0.8px;text-underline-offset:1px;letter-spacing:0.15px;-webkit-text-stroke:0.1px #7a96d6;">Assembly line A</div>
<div class="t" style="left:572.80px;top:480.76px;font-size:9.5px;line-height:9.5px;color:#6b707c;font-weight:normal;font-style:italic;letter-spacing:0px;-webkit-text-stroke:0.1px #6b707c;">Sep 25, 2025</div>
<div class="t" style="left:708.20px;top:480.76px;font-size:9.5px;line-height:9.5px;color:#6b707c;font-weight:normal;font-style:italic;letter-spacing:0px;-webkit-text-stroke:0.1px #6b707c;">Sep 26, 2025</div>
<div class="a" style="left:845.30px;top:473.30px;width:90.90px;height:22.50px;background:#a0d6b6;border-radius:5.5px;"></div>
<div class="t" style="left:866.8px;top:481.10px;font-size:7.5px;line-height:7.5px;color:#fff;font-style:italic;letter-spacing:-0.3px;">CLOSED</div>
<div class="a" style="left:899.20px;top:477.60px;width:0.70px;height:14.00px;background:rgba(255,255,255,0.45);border-radius:0px;"></div>
<div class="t" style="left:906.5px;top:481.10px;font-size:7.5px;line-height:7.5px;color:#fff;font-style:italic;">82</div>
<div class="a" style="left:965.30px;top:473.30px;width:22.70px;height:22.50px;background:#a7adb8;border-radius:5.5px;"></div>
<div class="a" style="left:972.60px;top:483.60px;width:1.60px;height:1.60px;background:#ffffff;border-radius:0.8px;"></div>
<div class="a" style="left:975.80px;top:483.60px;width:1.60px;height:1.60px;background:#ffffff;border-radius:0.8px;"></div>
<div class="a" style="left:979.00px;top:483.60px;width:1.60px;height:1.60px;background:#ffffff;border-radius:0.8px;"></div>
<svg class="a" style="left:934.00px;top:571.00px;" width="6" height="7.5" viewBox="0 0 6 7.5" fill="none"><polyline points="4.6,0.9 1.5,3.75 4.6,6.6" stroke="#d3d6dc" stroke-width="1.1" stroke-linecap="round" stroke-linejoin="round"/></svg>
<div class="a" style="left:948.10px;top:563.70px;width:22.80px;height:22.80px;background:#2b3549;border-radius:11.4px;"></div>
<svg class="a" style="left:956.50px;top:571.50px;" width="6" height="8" viewBox="0 0 6 8" fill="none"><path d="M1.2 2.1 L3.5 0.9 V7.3" stroke="#e3e6ea" stroke-width="1.9" stroke-linejoin="round"/></svg>
<svg class="a" style="left:979.00px;top:571.00px;" width="6" height="7.5" viewBox="0 0 6 7.5" fill="none"><polyline points="1.4,0.9 4.5,3.75 1.4,6.6" stroke="#d3d6dc" stroke-width="1.1" stroke-linecap="round" stroke-linejoin="round"/></svg>
<div class="a" style="left:1018.00px;top:621.00px;width:6.00px;height:6.00px;background:radial-gradient(circle at 0 0, rgba(0,0,0,0) 5.5px, #1b1c1e 6.5px);border-radius:0px;"></div>
</body></html>
